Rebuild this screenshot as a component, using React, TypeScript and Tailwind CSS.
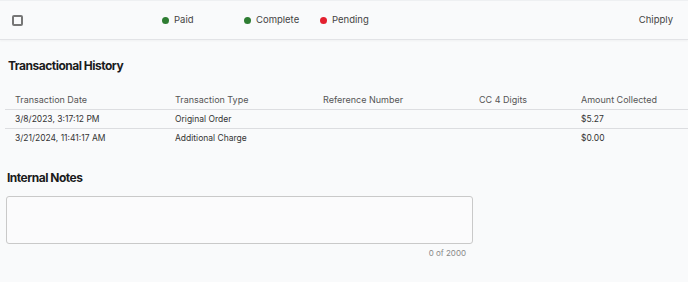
import React from 'react';

const columns = ['Transaction Date', 'Transaction Type', 'Reference Number', 'CC 4 Digits', 'Amount Collected'];

const rows = [
  ['3/8/2023, 3:17:12 PM', 'Original Order', '', '', '$5.27'],
  ['3/21/2024, 11:41:17 AM', 'Additional Charge', '', '', '$0.00'],
];

const statuses = [
  { label: 'Paid', color: 'bg-[#2e7d32]', width: 'w-[82px]' },
  { label: 'Complete', color: 'bg-[#2e7d32]', width: 'w-[76px]' },
  { label: 'Pending', color: 'bg-[#e3202f]', width: 'w-[76px]' },
];

export default function App() {
  return (
    <div className="w-[688px] h-[282px] bg-[#f9fafb] text-[#333] overflow-hidden" style={{ fontFamily: 'Inter, "Open Sans", sans-serif' }}>
      {/* Top status bar */}
      <div className="h-[40px] flex items-center border-b border-[#e2e3e6] border-t border-t-[#eef0f2] shadow-[0_1px_2px_rgba(0,0,0,0.04)]">
        <div className="ml-[12px] w-[11px] h-[11px] border-2 border-[#767676] rounded-[2px]" />
        <div className="ml-[139px] flex items-center">
          {statuses.map(s => (
            <div key={s.label} className={`flex items-center gap-[5px] ${s.width}`}>
              <span className={`w-[7px] h-[7px] rounded-full ${s.color}`} />
              <span className="text-[9.5px] text-[#444]">{s.label}</span>
            </div>
          ))}
        </div>
        <span className="ml-auto mr-[15px] text-[9.5px] text-[#444]">Chipply</span>
      </div>

      {/* Transactional history */}
      <h2 className="ml-[8px] mt-[17px] text-[12px] font-bold tracking-[-0.5px] text-[#1b1b1b] leading-[18px]">
        Transactional History
      </h2>
      <div className="ml-[5px] mt-[16px]">
        <div className="grid grid-cols-[160px_148px_156px_102px_1fr] h-[19px] items-center border-b border-[#dddee1] text-[9px] text-[#555]">
          {columns.map(c => (
            <div key={c} className="pl-[10px]">{c}</div>
          ))}
        </div>
        {rows.map((r, i) => (
          <div
            key={i}
            className={`grid grid-cols-[160px_148px_156px_102px_1fr] h-[19px] items-center text-[8.5px] text-[#333] ${i === 0 ? 'border-b border-[#dcdde0]' : ''}`}
          >
            {r.map((v, j) => (
              <div key={j} className="pl-[10px]">{v}</div>
            ))}
          </div>
        ))}
      </div>

      {/* Internal notes */}
      <h2 className="ml-[7px] mt-[21px] text-[12px] font-bold tracking-[-0.5px] text-[#1b1b1b] leading-[18px]">
        Internal Notes
      </h2>
      <div className="ml-[6px] mt-[9px] w-[467px]">
        <textarea className="block w-full h-[48px] border border-[#c9c9c9] rounded-[3px] bg-[#fbfbfc] resize-none outline-none" />
        <div className="mt-[3px] pr-[7px] text-right text-[8px] text-[#888]">0 of 2000</div>
      </div>
    </div>
  );
}
